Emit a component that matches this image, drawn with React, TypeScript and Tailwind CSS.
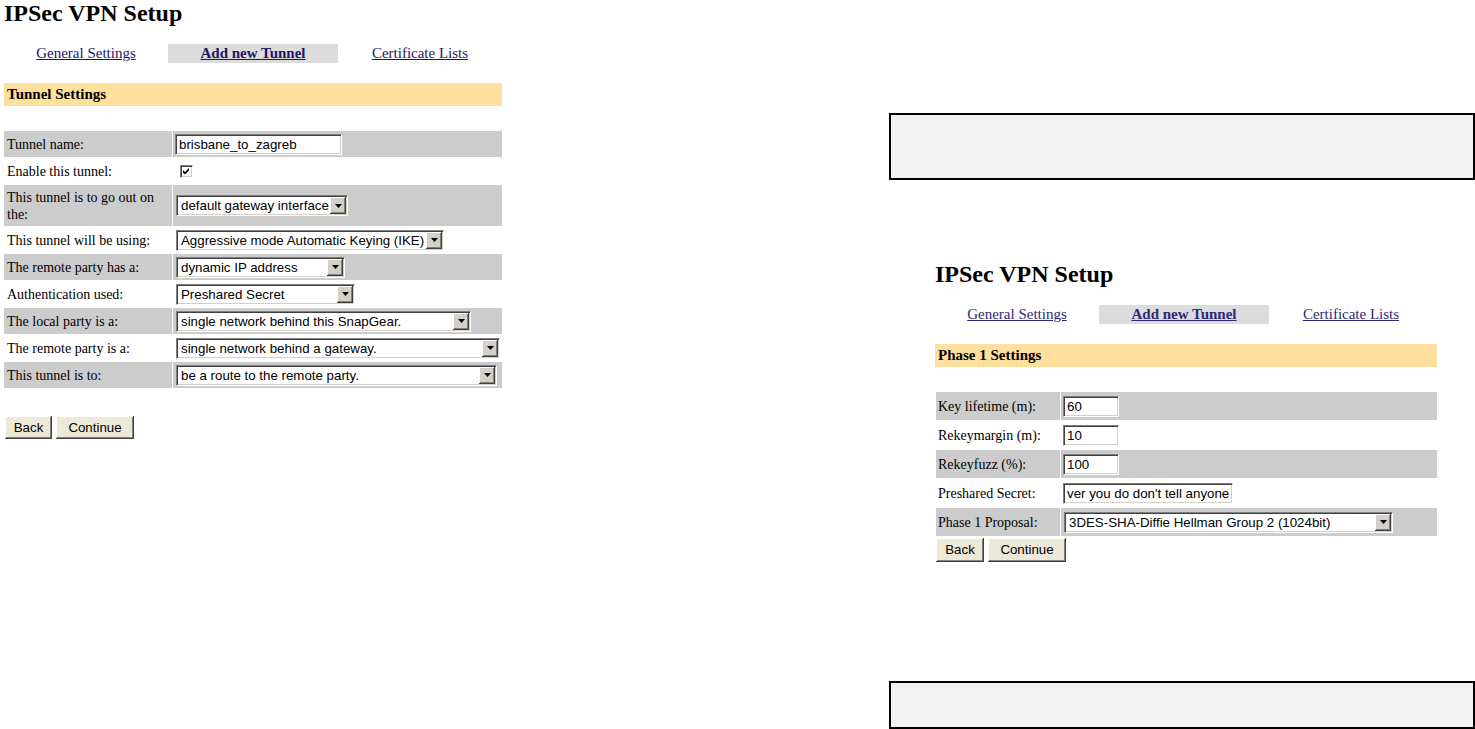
import React from 'react';

// classic win2k style widgets
const sunken =
  'border border-t-[#808080] border-l-[#808080] border-b-white border-r-white bg-white shadow-[inset_1px_1px_0_#404040,inset_-1px_-1px_0_#d4d0c8]';
const raised =
  'bg-[#d4d0c8] shadow-[inset_-1px_-1px_0_#404040,inset_1px_1px_0_#ffffff,inset_-2px_-2px_0_#808080,inset_2px_2px_0_#d4d0c8]';
const sans = "font-['Liberation_Sans',Arial,sans-serif]";

function TextInput({ value, w }: { value: string; w: string }) {
  return (
    <div className={`flex h-[21px] items-center overflow-hidden ${w} ${sunken}`}>
      <span className={`whitespace-nowrap pl-[3px] text-[13.3px] leading-[15px] text-black ${sans}`}>{value}</span>
    </div>
  );
}

function Select({ value, w }: { value: string; w: string }) {
  return (
    <div className={`ml-[1px] flex h-[21px] items-center ${w} ${sunken}`}>
      <span className={`flex-1 truncate pl-[4px] text-[13.3px] leading-[15px] text-black ${sans}`}>{value}</span>
      <div className={`mr-[1px] flex h-[17px] w-[16px] shrink-0 items-center justify-center ${raised}`}>
        <svg width="7" height="4" viewBox="0 0 7 4">
          <polygon points="0,0 7,0 3.5,4" fill="#000" />
        </svg>
      </div>
    </div>
  );
}

function Checkbox() {
  return (
    <div className={`ml-[5px] flex h-[13px] w-[13px] items-center justify-center ${sunken}`}>
      <svg width="7" height="7" viewBox="0 0 7 7">
        <path d="M0 2 L2 4 L6 0 L6 2.6 L2 6.6 L0 4.6 Z" fill="#000" />
      </svg>
    </div>
  );
}

function Button({ label, w, h }: { label: string; w: string; h: string }) {
  return (
    <div
      className={`flex items-center justify-center bg-[#ece9d8] text-[13.3px] text-black ${w} ${h} ${sans} shadow-[inset_-1px_-1px_0_#404040,inset_1px_1px_0_#ffffff,inset_-2px_-2px_0_#808080]`}
    >
      {label}
    </div>
  );
}

function Header({ section, link }: { section: string; link: string }) {
  return (
    <>
      <h1 className="text-[24px] font-bold leading-[26px] text-black">IPSec VPN Setup</h1>
      <div className="mt-[18px] grid h-[19px] grid-cols-[164px_170px_164px] text-center text-[15px] leading-[19px]">
        <span><span className={`underline ${link}`}>General Settings</span></span>
        <span className="bg-[#dcdcdc]"><span className={`font-bold underline ${link}`}>Add new Tunnel</span></span>
        <span><span className={`underline ${link}`}>Certificate Lists</span></span>
      </div>
      <div className="mt-[20px] h-[23px] bg-[#ffdf9e] pl-[3px] text-[15px] font-bold leading-[23px] text-black">
        {section}
      </div>
    </>
  );
}

type Row = { label: string; field: React.ReactNode; gray: boolean; h: string };

const tunnelRows: Row[] = [
  { label: 'Tunnel name:', field: <TextInput value="brisbane_to_zagreb" w="w-[167px]" />, gray: true, h: 'h-[26px]' },
  { label: 'Enable this tunnel:', field: <Checkbox />, gray: false, h: 'h-[26px]' },
  { label: 'This tunnel is to go out on the:', field: <Select value="default gateway interface" w="w-[172px]" />, gray: true, h: 'h-[41px]' },
  { label: 'This tunnel will be using:', field: <Select value="Aggressive mode Automatic Keying (IKE)" w="w-[268px]" />, gray: false, h: 'h-[26px]' },
  { label: 'The remote party has a:', field: <Select value="dynamic IP address" w="w-[169px]" />, gray: true, h: 'h-[26px]' },
  { label: 'Authentication used:', field: <Select value="Preshared Secret" w="w-[179px]" />, gray: false, h: 'h-[26px]' },
  { label: 'The local party is a:', field: <Select value="single network behind this SnapGear." w="w-[295px]" />, gray: true, h: 'h-[26px]' },
  { label: 'The remote party is a:', field: <Select value="single network behind a gateway." w="w-[324px]" />, gray: false, h: 'h-[26px]' },
  { label: 'This tunnel is to:', field: <Select value="be a route to the remote party." w="w-[321px]" />, gray: true, h: 'h-[26px]' },
];

const phaseRows: Row[] = [
  { label: 'Key lifetime (m):', field: <TextInput value="60" w="w-[56px]" />, gray: true, h: 'h-[28px]' },
  { label: 'Rekeymargin (m):', field: <TextInput value="10" w="w-[56px]" />, gray: false, h: 'h-[28px]' },
  { label: 'Rekeyfuzz (%):', field: <TextInput value="100" w="w-[56px]" />, gray: true, h: 'h-[28px]' },
  { label: 'Preshared Secret:', field: <TextInput value="ver you do don't tell anyone" w="w-[170px]" />, gray: false, h: 'h-[28px]' },
  { label: 'Phase 1 Proposal:', field: <Select value="3DES-SHA-Diffie Hellman Group 2 (1024bit)" w="w-[329px]" />, gray: true, h: 'h-[28px]' },
];

function FormTable({ rows, cols, pad }: { rows: Row[]; cols: string; pad: string }) {
  return (
    <div className={`grid gap-[1px] ${cols}`}>
      {rows.map((r) => (
        <React.Fragment key={r.label}>
          <div className={`flex items-center ${pad} text-[14px] leading-[17px] text-black ${r.h} ${r.gray ? 'bg-[#cccccc]' : ''}`}>
            {r.label}
          </div>
          <div className={`flex items-center pl-[2px] ${r.h} ${r.gray ? 'bg-[#cccccc]' : ''}`}>{r.field}</div>
        </React.Fragment>
      ))}
    </div>
  );
}

export default function App() {
  return (
    <div className="flex h-[729px] w-[1475px] overflow-hidden bg-white font-['Liberation_Serif','Times_New_Roman',serif]">
      {/* first screenshot: tunnel settings */}
      <div className="w-[502px] shrink-0 pl-[4px]">
        <Header section="Tunnel Settings" link="text-[#1e1466]" />
        <div className="mt-[25px]">
          <FormTable rows={tunnelRows} cols="grid-cols-[168px_329px]" pad="pl-[3px]" />
        </div>
        <div className="mt-[28px] ml-[1px] flex gap-[4px]">
          <Button label="Back" w="w-[47px]" h="h-[23px]" />
          <Button label="Continue" w="w-[78px]" h="h-[23px]" />
        </div>
      </div>

      {/* right column */}
      <div className="ml-[387px] flex w-[586px] shrink-0 flex-col">
        <div className="mt-[113px] h-[67px] border-2 border-black bg-[#f2f2f2]" />
        <div className="mt-[81px] ml-[46px] w-[502px]">
          <Header section="Phase 1 Settings" link="text-[#2e2878]" />
          <div className="mt-[25px] ml-[1px]">
            <FormTable rows={phaseRows} cols="grid-cols-[124px_376px]" pad="pl-[2px]" />
          </div>
          <div className="mt-[2px] ml-[1px] flex gap-[4px]">
            <Button label="Back" w="w-[48px]" h="h-[24px]" />
            <Button label="Continue" w="w-[78px]" h="h-[24px]" />
          </div>
        </div>
        <div className="mt-[119px] h-[48px] border-2 border-black bg-[#f2f2f2]" />
      </div>
    </div>
  );
}
